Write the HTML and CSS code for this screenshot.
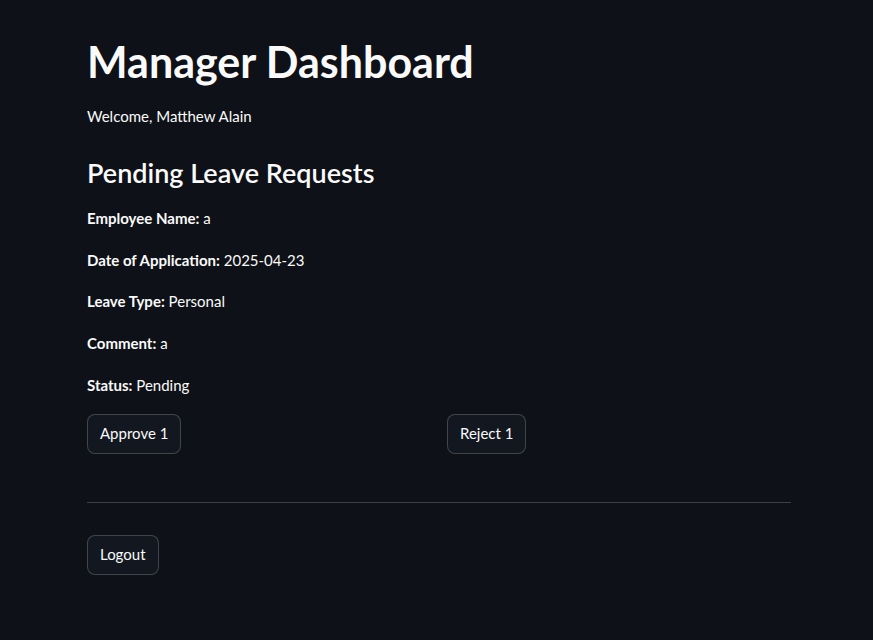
FILE: index.html
```html
<!DOCTYPE html>
<html lang="en">
<head>
<meta charset="utf-8">
<title>Manager Dashboard</title>
<link rel="stylesheet" href="styles.css">
</head>
<body>
<main class="main">
  <h1 class="title">Manager Dashboard</h1>
  <p class="text">Welcome, Matthew Alain</p>
  <h3 class="subtitle">Pending Leave Requests</h3>
  <p class="text"><strong>Employee Name:</strong> a</p>
  <p class="text"><strong>Date of Application:</strong> 2025-04-23</p>
  <p class="text"><strong>Leave Type:</strong> Personal</p>
  <p class="text"><strong>Comment:</strong> a</p>
  <p class="text"><strong>Status:</strong> Pending</p>
  <div class="columns">
    <div class="col"><button class="btn" type="button">Approve 1</button></div>
    <div class="col"><button class="btn" type="button">Reject 1</button></div>
  </div>
  <hr class="divider">
  <div><button class="btn" type="button">Logout</button></div>
</main>
</body>
</html>
```

FILE: styles.css
```css
html, body {
  margin: 0;
  padding: 0;
  background: #0e1117;
}
body {
  color: #fafafa;
  font-family: Lato, "Noto Sans", sans-serif;
  font-size: 15px;
}
.main {
  width: 704px;
  margin-left: 87px;
  padding-top: 35px;
  display: flex;
  flex-direction: column;
  gap: 16px;
}
.title {
  margin: 0;
  font-size: 43px;
  font-weight: 700;
  line-height: 53px;
}
.subtitle {
  margin: 10px 0 1px;
  font-size: 27px;
  font-weight: 600;
  line-height: 33.6px;
}
.text {
  margin: 0;
  line-height: 25.6px;
}
.text strong {
  font-weight: 700;
}
.columns {
  display: flex;
  gap: 16px;
}
.col {
  flex: 1;
}
.btn {
  font-family: inherit;
  font-size: 15px;
  color: #fafafa;
  background: #13171f;
  border: 1px solid rgba(250, 250, 250, 0.2);
  border-radius: 8px;
  min-height: 40px;
  padding: 4px 12px;
  line-height: 25.6px;
}
.divider {
  margin: 32px 0 16px;
  border: none;
  height: 1px;
  background: rgba(250, 250, 250, 0.2);
}
```
